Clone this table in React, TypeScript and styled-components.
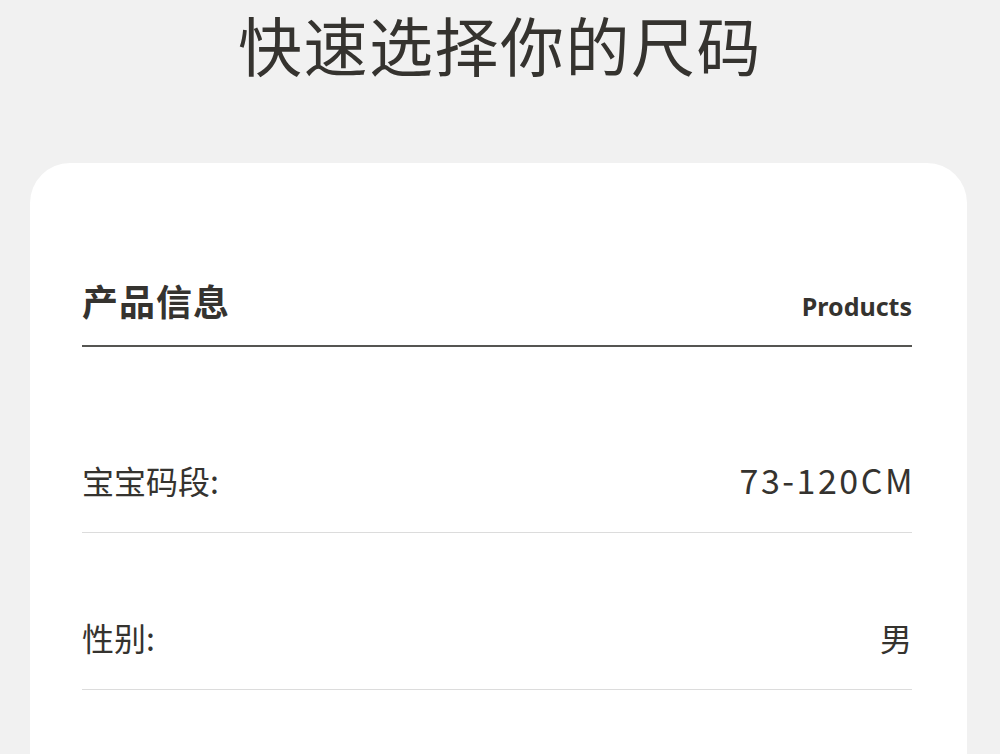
import React from 'react';
import styled, { createGlobalStyle } from 'styled-components';

const GlobalStyle = createGlobalStyle`
  html, body {
    margin: 0;
    padding: 0;
    background: #f1f1f1;
  }
  body {
    font-family: "Noto Sans CJK SC", "Noto Sans", sans-serif;
    color: #35332f;
  }
`;

const Page = styled.div`
  width: 1000px;
  height: 754px;
  overflow: hidden;
  background: #f1f1f1;
`;

const Title = styled.h1`
  margin: 0;
  padding-top: 3px;
  font-size: 64px;
  line-height: 80px;
  font-weight: 400;
  text-align: center;
  letter-spacing: 1.5px;
  color: #35332f;
`;

const Card = styled.div`
  margin: 80px 33px 0 30px;
  padding: 112px 55px 0 52px;
  background: #ffffff;
  border-radius: 40px 40px 0 0;
  min-height: 600px;
`;

const Header = styled.div`
  display: flex;
  justify-content: space-between;
  align-items: baseline;
  line-height: 50px;
  padding-bottom: 14px;
  border-bottom: 2px solid #555552;
`;

const HeaderTitle = styled.div`
  font-size: 36px;
  font-weight: 700;
  letter-spacing: 1px;
`;

const HeaderSub = styled.div`
  font-family: "Noto Sans", sans-serif;
  font-size: 25px;
  font-weight: 700;
`;

const Rows = styled.div`
  padding-top: 29px;
`;

const Row = styled.div`
  display: flex;
  justify-content: space-between;
  align-items: center;
  padding: 84px 0 32px;
  line-height: 40px;
  border-bottom: 1px solid #dcdcdc;
`;

const Label = styled.div`
  font-size: 32px;
  font-weight: 400;
`;

const Value = styled.div<{ $spaced?: boolean }>`
  font-size: ${p => (p.$spaced ? '34px' : '32px')};
  font-weight: 400;
  letter-spacing: ${p => (p.$spaced ? '2.5px' : '0')};
  margin-right: ${p => (p.$spaced ? '-3px' : '0')};
`;

const rows = [
  { label: '宝宝码段:', value: '73-120CM', spaced: true },
  { label: '性别:', value: '男', spaced: false },
];

export default function App() {
  return (
    <Page>
      <GlobalStyle />
      <Title>快速选择你的尺码</Title>
      <Card>
        <Header>
          <HeaderTitle>产品信息</HeaderTitle>
          <HeaderSub>Products</HeaderSub>
        </Header>
        <Rows>
          {rows.map(r => (
            <Row key={r.label}>
              <Label>{r.label}</Label>
              <Value $spaced={r.spaced}>{r.value}</Value>
            </Row>
          ))}
        </Rows>
      </Card>
    </Page>
  );
}
